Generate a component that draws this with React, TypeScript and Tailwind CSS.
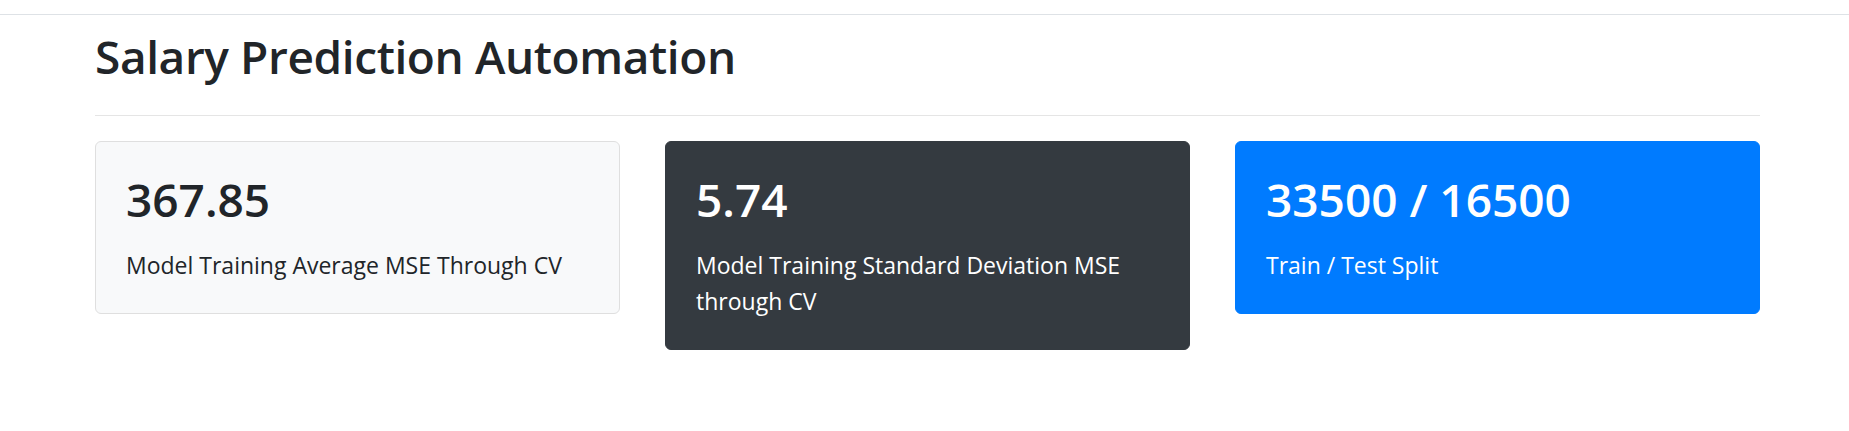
import React from "react";

interface StatCardProps {
  value: string;
  label: string;
  tone: "light" | "dark" | "primary";
}

const tones: Record<StatCardProps["tone"], string> = {
  light: "bg-[#f8f9fa] border-[#dfdfdf] text-[#212529]",
  dark: "bg-[#343a40] border-[#343a40] text-white",
  primary: "bg-[#007bff] border-[#007bff] text-white",
};

const StatCard: React.FC<StatCardProps> = ({ value, label, tone }) => {
  return (
    <div className={`self-start rounded-[6px] border px-[30px] pt-[28px] pb-[30px] ${tones[tone]}`}>
      <div className="text-[46px] font-semibold leading-[58px] mb-[19px]">{value}</div>
      <p className="text-[23px] leading-[36px]">{label}</p>
    </div>
  );
};

export default function App() {
  return (
    <div className="min-h-[431px] bg-white font-['Open_Sans',sans-serif] text-[#212529]">
      {/* top bar edge */}
      <div className="h-[15px] border-b border-[#dee2e6]" />

      <div className="pl-[95px] pr-[89px]">
        {/* Header */}
        <h1 className="pt-[12px] text-[46px] font-semibold leading-[58px] tracking-[-0.4px]">
          Salary Prediction Automation
        </h1>
        <hr className="mt-[30px] border-t border-[#e5e5e5]" />

        {/* Stats */}
        <div className="mt-[25px] grid grid-cols-3 gap-[45px]">
          <StatCard value="367.85" label="Model Training Average MSE Through CV" tone="light" />
          <StatCard value="5.74" label="Model Training Standard Deviation MSE through CV" tone="dark" />
          <StatCard value="33500 / 16500" label="Train / Test Split" tone="primary" />
        </div>
      </div>
    </div>
  );
}
